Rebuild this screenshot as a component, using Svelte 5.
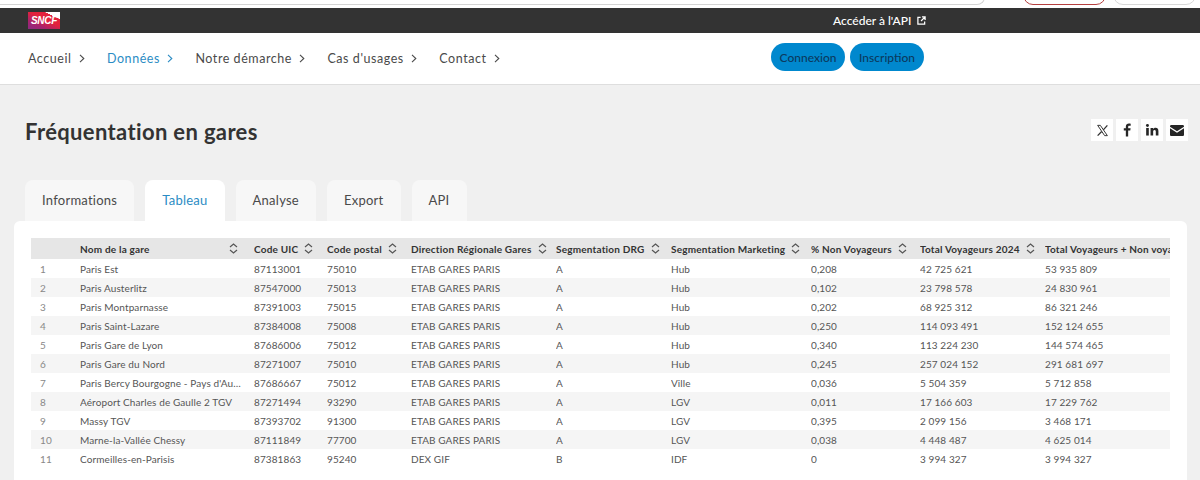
<script>
  const navItems = ['Accueil', 'Données', 'Notre démarche', "Cas d'usages", 'Contact'];
  const tabs = ['Informations', 'Tableau', 'Analyse', 'Export', 'API'];

  const columns = [
    { label: '', width: 49 },
    { label: 'Nom de la gare', width: 174, spread: true },
    { label: 'Code UIC', width: 73 },
    { label: 'Code postal', width: 84 },
    { label: 'Direction Régionale Gares', width: 145 },
    { label: 'Segmentation DRG', width: 115 },
    { label: 'Segmentation Marketing', width: 140 },
    { label: '% Non Voyageurs', width: 109 },
    { label: 'Total Voyageurs 2024', width: 125 },
    { label: 'Total Voyageurs + Non voyageurs 2024', width: 240 }
  ];

  const rows = [
    ['Paris Est', '87113001', '75010', 'ETAB GARES PARIS', 'A', 'Hub', '0,208', '42 725 621', '53 935 809'],
    ['Paris Austerlitz', '87547000', '75013', 'ETAB GARES PARIS', 'A', 'Hub', '0,102', '23 798 578', '24 830 961'],
    ['Paris Montparnasse', '87391003', '75015', 'ETAB GARES PARIS', 'A', 'Hub', '0,202', '68 925 312', '86 321 246'],
    ['Paris Saint-Lazare', '87384008', '75008', 'ETAB GARES PARIS', 'A', 'Hub', '0,250', '114 093 491', '152 124 655'],
    ['Paris Gare de Lyon', '87686006', '75012', 'ETAB GARES PARIS', 'A', 'Hub', '0,340', '113 224 230', '144 574 465'],
    ['Paris Gare du Nord', '87271007', '75010', 'ETAB GARES PARIS', 'A', 'Hub', '0,245', '257 024 152', '291 681 697'],
    ["Paris Bercy Bourgogne - Pays d'Auvergne", '87686667', '75012', 'ETAB GARES PARIS', 'A', 'Ville', '0,036', '5 504 359', '5 712 858'],
    ['Aéroport Charles de Gaulle 2 TGV', '87271494', '93290', 'ETAB GARES PARIS', 'A', 'LGV', '0,011', '17 166 603', '17 229 762'],
    ['Massy TGV', '87393702', '91300', 'ETAB GARES PARIS', 'A', 'LGV', '0,395', '2 099 156', '3 468 171'],
    ['Marne-la-Vallée Chessy', '87111849', '77700', 'ETAB GARES PARIS', 'A', 'LGV', '0,038', '4 448 487', '4 625 014'],
    ['Cormeilles-en-Parisis', '87381863', '95240', 'DEX GIF', 'B', 'IDF', '0', '3 994 327', '3 994 327']
  ];
</script>

<div class="page">
  <div class="chrome">
    <span class="chrome-field"></span>
    <span class="chrome-pill red"></span>
    <span class="chrome-pill"></span>
  </div>

  <div class="topbar">
    <div class="logo"><span>SNCF</span></div>
    <a class="api-link" href="#api">
      Accéder à l'API
      <svg width="9" height="9" viewBox="0 0 10 10" fill="none" stroke="#fff" stroke-width="1.4">
        <path d="M4 1.5H1v7.5h7.5V6" />
        <path d="M5.5 1h3.5v3.5M9 1 4.5 5.5" />
      </svg>
    </a>
  </div>

  <nav class="nav">
    <ul>
      {#each navItems as item}
        <li class:active={item === 'Données'}>
          {item}
          <svg width="6" height="9" viewBox="0 0 6 9" fill="none" stroke="currentColor" stroke-width="1.1">
            <path d="M1 .8 4.8 4.5 1 8.2" />
          </svg>
        </li>
      {/each}
    </ul>
    <div class="auth">
      <button>Connexion</button>
      <button>Inscription</button>
    </div>
  </nav>

  <main>
    <div class="head">
      <h1>Fréquentation en gares</h1>
      <div class="share">
        <span>
          <svg width="13" height="13" viewBox="0 0 24 24" fill="none" stroke="#333" stroke-width="1.8">
            <path d="M3 2.5h5l13 19h-5z" />
            <path d="M21 2.5 13.5 10.800M10.500 13.800 3 21.500" stroke-width="2.4" />
          </svg>
        </span>
        <span>
          <svg width="14" height="14" viewBox="0 0 24 24" fill="#262626">
            <path d="M14 23v-10h3.600l.6-4H14V6.600c0-1.200.4-2 2-2h2.300V1.100C17.900 1 16.600 1 15.300 1 12.300 1 10 2.800 10 6.200V9H6.500v4H10v10z" />
          </svg>
        </span>
        <span>
          <svg width="14" height="14" viewBox="0 0 24 24" fill="#262626">
            <rect x="2" y="8.500" width="4.500" height="13" />
            <circle cx="4.200" cy="4.200" r="2.500" />
            <path d="M9.500 8.500h4.300v1.900c.8-1.300 2.300-2.300 4.300-2.300 3.800 0 4.900 2.500 4.900 6.100v7.300h-4.500v-6.500c0-1.800-.4-3.100-2.100-3.100-1.900 0-2.400 1.400-2.400 3.100v6.500H9.500z" />
          </svg>
        </span>
        <span>
          <svg width="14" height="11" viewBox="0 0 14 11" fill="#262626">
            <path d="M1.300 0h11.400C13.400 0 14 .6 14 1.300v.5L7 6.200 0 1.800v-.5C0 .6.600 0 1.300 0z" />
            <path d="M0 3.300 7 7.700l7-4.400v6.400c0 .7-.6 1.300-1.300 1.300H1.300C.6 11 0 10.400 0 9.700z" />
          </svg>
        </span>
      </div>
    </div>

    <div class="tabs">
      {#each tabs as tab}
        <div class="tab" class:current={tab === 'Tableau'}>{tab}</div>
      {/each}
    </div>

    <section class="card">
      <div class="table-wrap">
        <table>
          <colgroup>
            {#each columns as col}
              <col style="width: {col.width}px" />
            {/each}
          </colgroup>
          <thead>
            <tr>
              {#each columns as col}
                <th>
                  {#if col.label}
                    <div class="th-inner" class:spread={col.spread}>
                      <span>{col.label}</span>
                      <svg width="9" height="11" viewBox="0 0 9 11" fill="none" stroke="#555" stroke-width="1.2">
                        <path d="M1 4 4.500 1 8 4M1 7l3.500 3L8 7" />
                      </svg>
                    </div>
                  {/if}
                </th>
              {/each}
            </tr>
          </thead>
          <tbody>
            {#each rows as row, i}
              <tr>
                <td class="num">{i + 1}</td>
                {#each row as cell}
                  <td>{cell}</td>
                {/each}
              </tr>
            {/each}
          </tbody>
        </table>
      </div>
    </section>
  </main>
</div>

<style>
  :global(body) {
    margin: 0;
    background: #f0f0f0;
    font-family: Lato, "Open Sans", sans-serif;
    overflow: hidden;
  }

  .page {
    width: 1200px;
    height: 480px;
    overflow: hidden;
  }

  .chrome {
    height: 8px;
    background: #fff;
    display: flex;
    align-items: flex-end;
    overflow: hidden;
  }

  .chrome-field {
    width: 985px;
    height: 12px;
    margin-bottom: 3px;
    border: solid #d4d4d4;
    border-width: 0 1px 1px 0;
    border-bottom-right-radius: 8px;
    box-sizing: border-box;
  }

  .chrome-pill {
    width: 83px;
    height: 12px;
    margin: 0 0 3px 7px;
    border: 1px solid #d8d8d8;
    border-radius: 0 0 10px 10px;
    box-sizing: border-box;
  }

  .chrome-pill.red {
    margin-left: 38px;
    border-color: #b5403f;
  }

  .topbar {
    height: 25px;
    background: #333;
    display: flex;
    align-items: center;
    padding-left: 28px;
  }

  .logo {
    width: 32px;
    height: 17px;
    margin-top: -8px;
    margin-top: 0;
    background: linear-gradient(205deg, #fff 0 22%, #e3223c 23% 45%, #a5236f 75%, #8c2a82);
    display: flex;
    align-items: center;
    justify-content: center;
  }

  .logo span {
    color: #fff;
    font: italic 700 10px "Liberation Sans", sans-serif;
    letter-spacing: -0.3px;
  }

  .api-link {
    margin-left: 773px;
    color: #fff;
    font-size: 12px;
    font-weight: 500;
    text-decoration: none;
    display: flex;
    align-items: center;
    gap: 6px;
  }

  .nav {
    height: 51px;
    background: #fff;
    border-bottom: 1px solid #dedede;
    display: flex;
    align-items: center;
    padding-left: 28px;
  }

  .nav ul {
    list-style: none;
    margin: 0;
    padding: 0;
    display: flex;
    width: 743px;
    gap: 22.500px;
  }

  .nav li {
    font-size: 12.500px;
    letter-spacing: 0.55px;
    color: #4a4a4a;
    display: flex;
    align-items: center;
    gap: 7px;
  }

  .nav li.active {
    color: #2b8cc4;
  }

  .auth {
    display: flex;
    gap: 5px;
    margin-top: -3px;
  }

  .auth button {
    height: 28px;
    width: 74px;
    padding: 0;
    border: 0;
    border-radius: 14px;
    background: #0088ce;
    color: #0b3a5e;
    font: 500 12px Lato, sans-serif;
  }

  .head {
    height: 95px;
    display: flex;
    align-items: center;
    justify-content: space-between;
    padding: 0 12px 0 25px;
  }

  h1 {
    margin: 0 0 2px;
    font-size: 22px;
    font-weight: 700;
    letter-spacing: 0.35px;
    color: #333;
  }

  .share {
    display: flex;
    gap: 3px;
    margin-bottom: 5px;
  }

  .share span {
    width: 22px;
    height: 22px;
    background: #fff;
    display: flex;
    align-items: center;
    justify-content: center;
  }

  .tabs {
    display: flex;
    gap: 11px;
    padding-left: 25px;
  }

  .tab {
    height: 41px;
    padding: 0 17px;
    background: #f7f7f7;
    border-radius: 8px 8px 0 0;
    font-size: 13px;
    letter-spacing: 0.25px;
    line-height: 40px;
    color: #4a4a4a;
  }

  .tab.current {
    background: #fff;
    color: #2b8cc4;
  }

  .card {
    margin: 0 13px 0 14px;
    height: 300px;
    padding: 17px 17px 0;
    background: #fff;
    border-radius: 6px 6px 0 0;
  }

  .table-wrap {
    width: 1139px;
    overflow: hidden;
  }

  table {
    width: 1254px;
    table-layout: fixed;
    border-collapse: collapse;
    font-size: 10px;
    color: #555;
  }

  thead tr {
    background: #e6e6e6;
  }

  th {
    height: 21px;
    padding: 0 0 0 0;
    text-align: left;
    font-size: 10px;
    font-weight: 700;
    letter-spacing: 0.2px;
    color: #333;
    white-space: nowrap;
    overflow: hidden;
  }

  .th-inner {
    display: flex;
    align-items: center;
    gap: 6px;
  }

  .th-inner.spread {
    justify-content: space-between;
    padding-right: 16px;
  }

  td {
    height: 19px;
    padding: 0 12px 0 0;
    white-space: nowrap;
    overflow: hidden;
    text-overflow: ellipsis;
    letter-spacing: 0.1px;
  }

  td.num {
    padding-left: 9px;
    color: #888;
  }

  tbody tr:nth-child(even) {
    background: #f5f5f5;
  }
</style>
